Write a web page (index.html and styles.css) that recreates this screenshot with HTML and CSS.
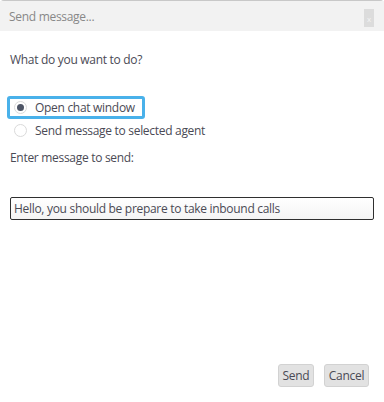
FILE: index.html
```html
<!DOCTYPE html>
<html>
<head>
<meta charset="utf-8">
<link rel="stylesheet" href="styles.css">
</head>
<body>
<div class="dialog">
  <div class="titlebar">
    <span class="title">Send message...</span>
    <span class="close">x</span>
  </div>
  <div class="content">
    <p class="question">What do you want to do?</p>
    <div class="options">
      <label class="option selected"><span class="radio checked"></span>Open chat window</label>
      <label class="option"><span class="radio"></span>Send message to selected agent</label>
    </div>
    <p class="prompt">Enter message to send:</p>
    <div class="input">Hello, you should be prepare to take inbound calls</div>
  </div>
  <div class="footer">
    <button class="btn">Send</button>
    <button class="btn">Cancel</button>
  </div>
</div>
</body>
</html>
```
FILE: styles.css
```css
html, body {
  margin: 0;
  padding: 0;
  background: #fff;
}
body {
  font-family: "Open Sans", "Noto Sans", sans-serif;
  font-size: 12px;
  letter-spacing: -0.3px;
  color: #4a4a55;
}
.dialog {
  width: 384px;
  height: 402px;
  display: flex;
  flex-direction: column;
  box-sizing: border-box;
  border-top: 1px solid #c8c8c8;
  border-radius: 4px 4px 0 0;
}
.titlebar {
  height: 30px;
  background: #f2f2f2;
  display: flex;
  align-items: center;
  justify-content: space-between;
  padding: 0 10px 0 9px;
  box-sizing: border-box;
}
.title {
  color: #888;
  font-size: 12px;
}
.close {
  width: 10px;
  height: 18px;
  background: #dcdcdc;
  color: #f4f4f4;
  font-size: 8px;
  display: flex;
  align-items: center;
  justify-content: center;
  margin-top: 4px;
}
.content {
  flex: 1;
  padding: 0 10px;
}
.question {
  margin: 21px 0 0 0;
  line-height: 16px;
}
.options {
  margin-top: 28px;
  display: flex;
  flex-direction: column;
}
.option {
  display: flex;
  align-items: center;
  height: 22px;
  padding: 0 0 0 4px;
}
.option.selected {
  align-self: flex-start;
  height: 17px;
  border: 3px solid #49b1ea;
  border-radius: 3px;
  padding: 0 7px 0 4px;
  margin-left: -3px;
}
.radio {
  width: 13px;
  height: 13px;
  border: 1px solid #dadada;
  border-radius: 50%;
  box-sizing: border-box;
  margin-right: 8px;
  background: #fff;
  display: flex;
  align-items: center;
  justify-content: center;
}
.radio.checked::after {
  content: "";
  width: 7px;
  height: 7px;
  border-radius: 50%;
  background: #4e5566;
}
.prompt {
  margin: 9px 0 0 0;
  line-height: 16px;
}
.input {
  margin-top: 31px;
  height: 23px;
  border: 1px solid #2f2f2f;
  border-radius: 2px;
  box-sizing: border-box;
  padding: 0 3px;
  display: flex;
  align-items: center;
  background: linear-gradient(#ffffff, #f4f4f4);
}
.footer {
  display: flex;
  justify-content: flex-end;
  gap: 10px;
  padding: 0 15px 15px 0;
}
.btn {
  font-family: inherit;
  font-size: 12px;
  letter-spacing: -0.3px;
  color: #4a4a55;
  background: #e2e2e2;
  border: 1px solid #d2d2d2;
  border-radius: 3px;
  height: 23px;
  width: 36px;
  padding: 0;
}
.btn + .btn {
  width: 45px;
}
```
